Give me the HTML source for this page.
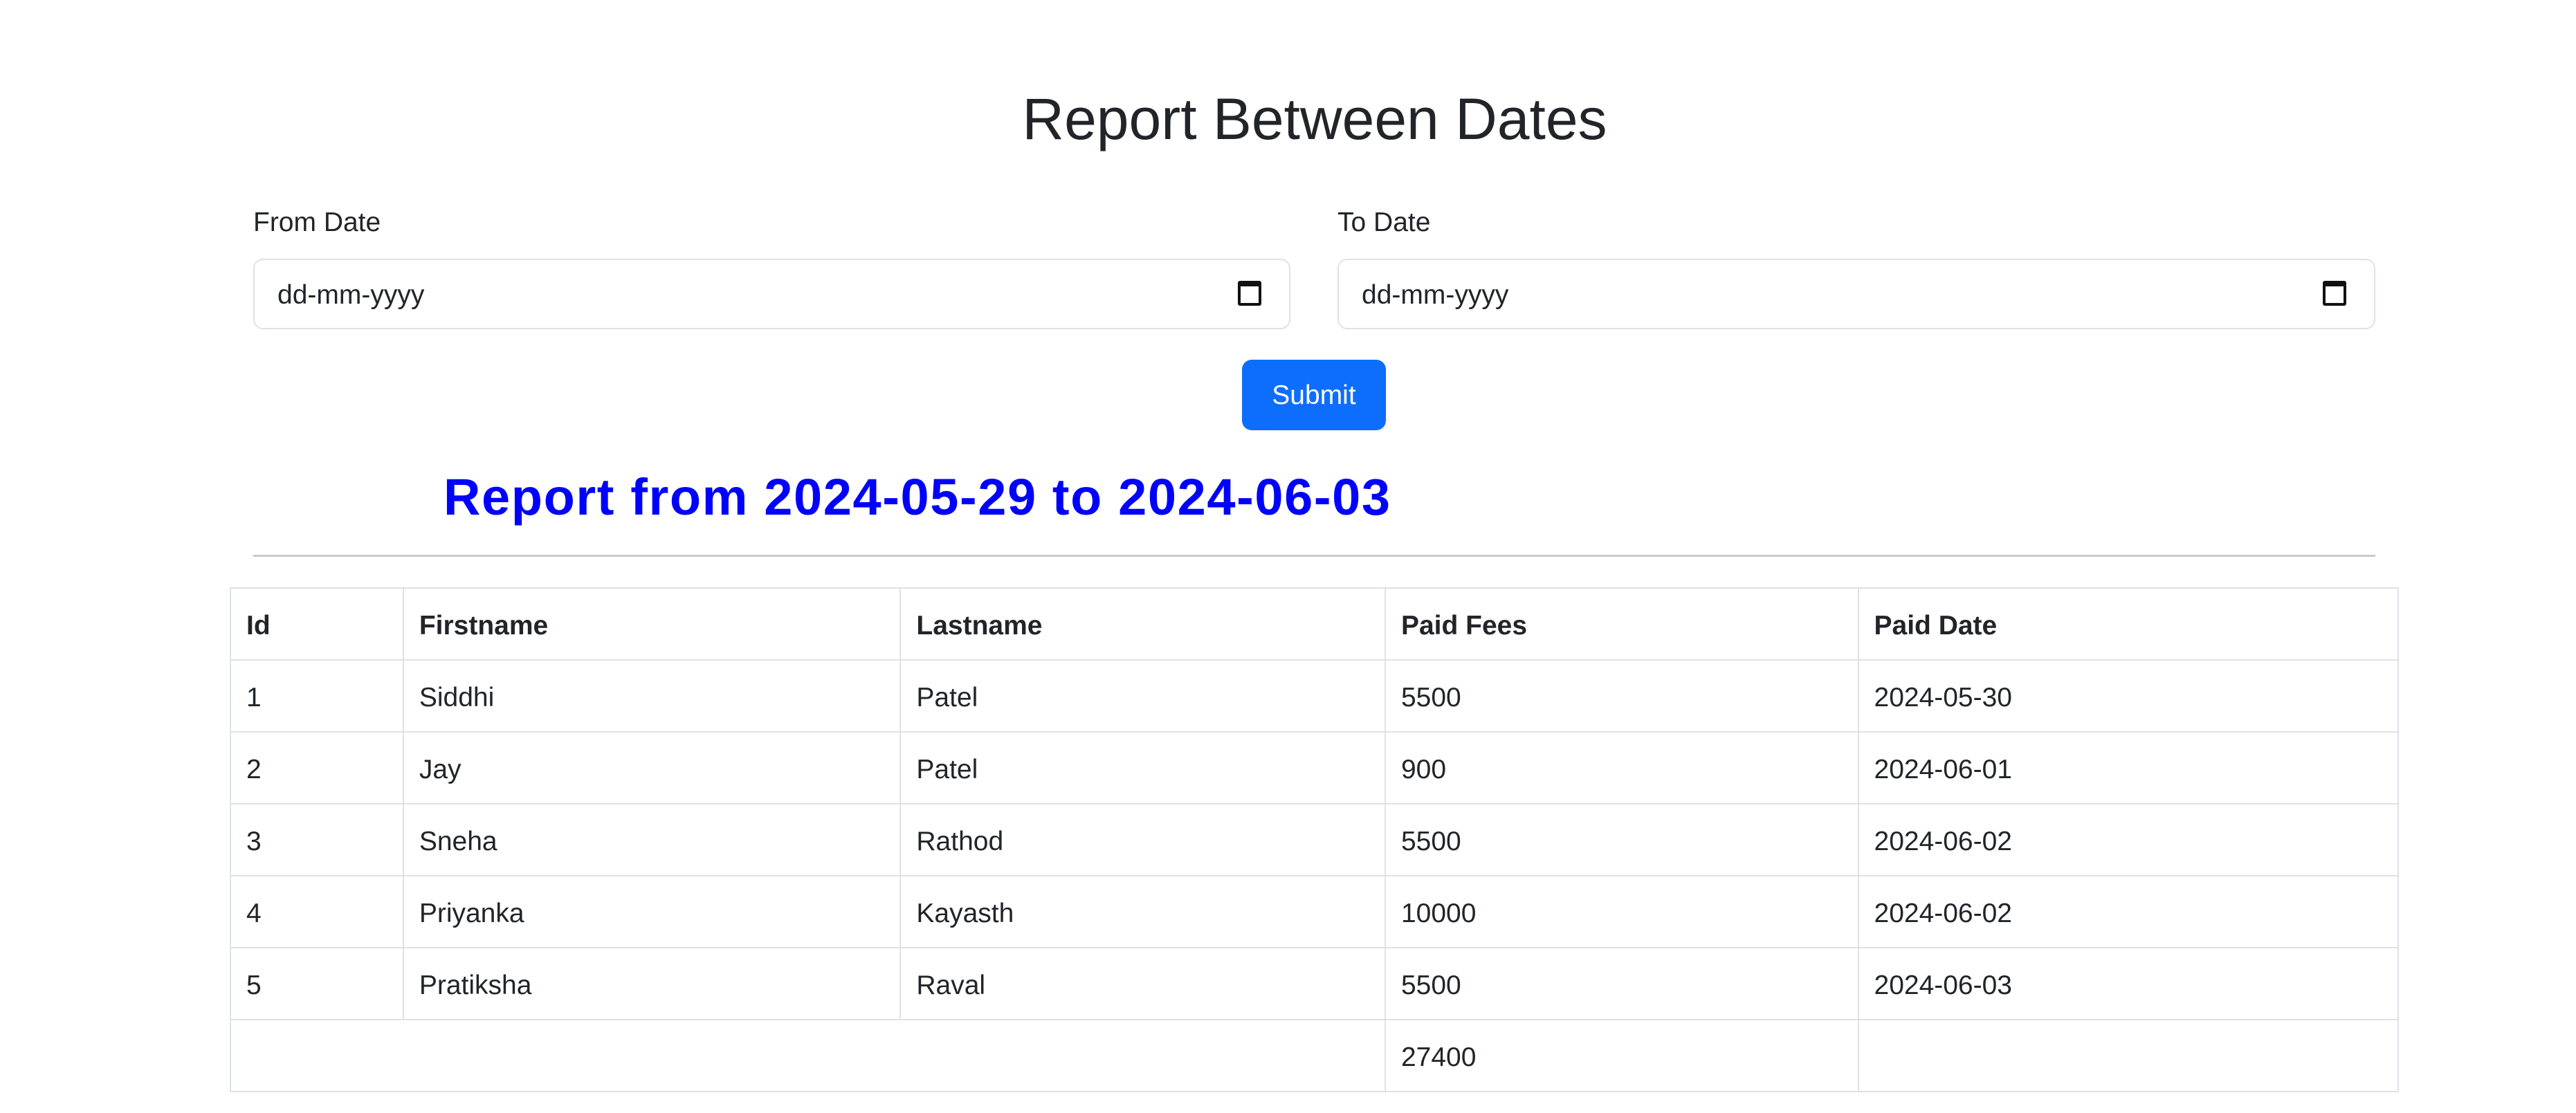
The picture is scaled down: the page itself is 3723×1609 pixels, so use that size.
<!DOCTYPE html>
<html><head><meta charset="utf-8"><style>
*{box-sizing:border-box;margin:0;padding:0}
body{width:3723px;height:1609px;background:#fff;font-family:"Liberation Sans",sans-serif;color:#212529;position:relative;overflow:hidden}
.a{position:absolute}
h1{position:absolute;left:0;width:3800px;top:122px;text-align:center;font-size:84px;font-weight:500;line-height:100px}
.lbl{font-size:39px;line-height:48px;top:298px}
.inp{top:374px;height:102px;border:2px solid #dee2e6;border-radius:14px;font-size:39px;padding-left:33px;line-height:102px;color:#212529}
.cal{position:absolute;right:40px;top:30px;width:34px;height:36px;border:4px solid #111;border-top-width:8px;border-radius:3px}
.btn{left:1795px;top:520px;width:208px;height:102px;background:#0d6efd;color:#fff;border-radius:14px;font-size:39px;text-align:center;line-height:104px}
h2{position:absolute;left:641px;top:674px;font-size:74px;font-weight:600;color:#0000ff;line-height:90px;white-space:nowrap;letter-spacing:1.6px}
hr{position:absolute;left:366px;width:3067px;top:802px;border:0;border-top:3px solid #c8c8c8}
table{position:absolute;left:332px;top:849px;width:3135px;border-collapse:collapse;font-size:39px}
td,th{border:2px solid #dee2e6;height:104px;padding:6px 0 0 22px;text-align:left;vertical-align:middle}
th{font-weight:700}
</style></head><body>
<h1>Report Between Dates</h1>
<div class="a lbl" style="left:366px">From Date</div>
<div class="a lbl" style="left:1933px">To Date</div>
<div class="a inp" style="left:366px;width:1499px">dd-mm-yyyy<span class="cal"></span></div>
<div class="a inp" style="left:1933px;width:1500px">dd-mm-yyyy<span class="cal"></span></div>
<div class="a btn">Submit</div>
<h2>Report from 2024-05-29 to 2024-06-03</h2>
<hr>
<table>
<colgroup><col style="width:250px"><col style="width:719px"><col style="width:701px"><col style="width:684px"><col style="width:781px"></colgroup>
<tr><th>Id</th><th>Firstname</th><th>Lastname</th><th>Paid Fees</th><th>Paid Date</th></tr>
<tr><td>1</td><td>Siddhi</td><td>Patel</td><td>5500</td><td>2024-05-30</td></tr>
<tr><td>2</td><td>Jay</td><td>Patel</td><td>900</td><td>2024-06-01</td></tr>
<tr><td>3</td><td>Sneha</td><td>Rathod</td><td>5500</td><td>2024-06-02</td></tr>
<tr><td>4</td><td>Priyanka</td><td>Kayasth</td><td>10000</td><td>2024-06-02</td></tr>
<tr><td>5</td><td>Pratiksha</td><td>Raval</td><td>5500</td><td>2024-06-03</td></tr>
<tr><td colspan="3"></td><td>27400</td><td></td></tr>
</table>
</body></html>
